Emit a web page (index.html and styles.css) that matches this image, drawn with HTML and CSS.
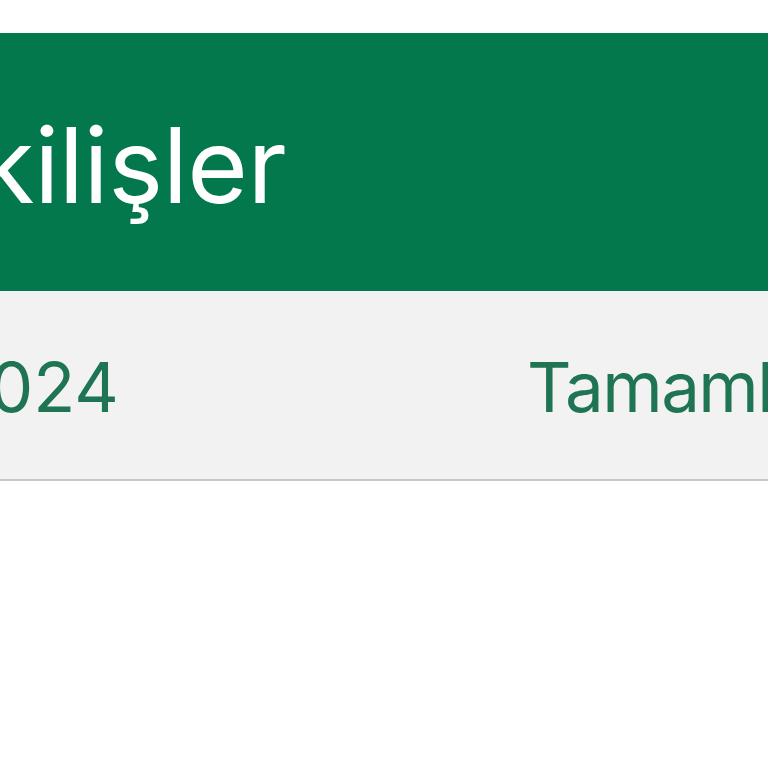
FILE: index.html
```html
<!DOCTYPE html>
<html lang="tr">
<head>
<meta charset="utf-8">
<link rel="stylesheet" href="styles.css">
</head>
<body>
<div class="page">
  <div class="topgap"></div>
  <header class="header"><h1 class="title">Çekilişler</h1></header>
  <div class="row">
    <span class="date">15.03.2024</span>
    <span class="status">Tamamlandı</span>
  </div>
</div>
</body>
</html>
```
FILE: styles.css
```css
html, body { margin: 0; padding: 0; background: #ffffff; }
.page { width: 768px; height: 768px; overflow: hidden; font-family: Inter, "Liberation Sans", Arial, sans-serif; }
.topgap { height: 33px; background: #ffffff; }
.header {
  height: 258px;
  background: #03784d;
  display: flex;
  align-items: center;
  padding-top: 6px;
  box-sizing: border-box;
  overflow: hidden;
}
.title {
  margin: 0 0 0 -158px;
  font-size: 104px;
  line-height: 1;
  font-weight: 400;
  letter-spacing: -0.5px;
  color: #ffffff;
  white-space: nowrap;
}
.row {
  height: 190px;
  box-sizing: border-box;
  background: #f2f2f2;
  border-bottom: 2px solid #c8c8c8;
  display: flex;
  align-items: center;
  gap: 408px;
  padding-top: 4px;
  overflow: hidden;
  font-size: 69px;
  line-height: 1;
  color: #1f7454;
  white-space: nowrap;
}
.date { margin-left: -243px; flex-shrink: 0; }
.status { flex-shrink: 0; letter-spacing: -1.5px; }
```
